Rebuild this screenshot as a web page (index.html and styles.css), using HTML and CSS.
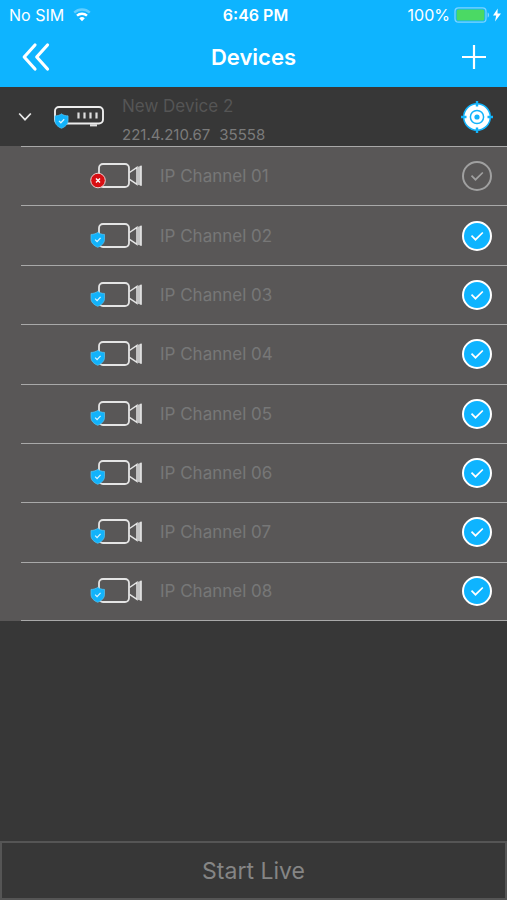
FILE: index.html
```html
<!DOCTYPE html>
<html lang="en">
<head>
<meta charset="utf-8">
<meta name="viewport" content="width=device-width, initial-scale=1">
<title>Devices</title>
<link rel="stylesheet" href="styles.css">
</head>
<body>
<svg class="defs" aria-hidden="true">
  <symbol id="shield" viewBox="0 0 16 17">
    <path d="M8 .8C6.200 2.300 3.700 3 1 3v5c0 4 3 6.700 7 8.300 4-1.600 7-4.300 7-8.300V3C12.300 3 9.800 2.300 8 .8z" fill="#12b3fb" stroke="#5cc6f5" stroke-width=".7"/>
    <path d="M5.300 8.400l2 2 3.600-3.800" fill="none" stroke="#d8f3ff" stroke-width="1.300"/>
  </symbol>
  <symbol id="camera" viewBox="0 0 52 28">
    <rect x="9" y="2" width="30" height="23" rx="4" fill="none" stroke="#e4e4e4" stroke-width="1.800"/>
    <path d="M39.500 10.500L47 5.500v16.800l-7.500-5" fill="none" stroke="#e4e4e4" stroke-width="1.500"/>
    <path d="M47 5.200l4.500-1.600v20.200L47 22.500z" fill="#c4c4c4"/>
    <path d="M51 3.700v20" stroke="#eee" stroke-width="1.300"/>
  </symbol>
  <symbol id="camera-ok" viewBox="0 0 52 28">
    <use href="#camera" width="52" height="28"/>
    <use href="#shield" x="0" y="9.500" width="15.500" height="16.500"/>
  </symbol>
  <symbol id="camera-off" viewBox="0 0 52 28">
    <use href="#camera" width="52" height="28"/>
    <circle cx="8" cy="18.500" r="7.300" fill="#d80e13" stroke="#ead0d0" stroke-width="1"/>
    <path d="M6 16.500l4 4m0-4l-4 4" stroke="#fff" stroke-width="1.400"/>
  </symbol>
  <symbol id="tick" viewBox="0 0 30 30">
    <path d="M9.500 14.700l4 4 7.300-7.200" fill="none" stroke="currentColor" stroke-width="1.700"/>
  </symbol>
</svg>

<div class="app">
  <header class="top">
    <div class="status">
      <div class="carrier">
        <span>No SIM</span>
        <svg width="18" height="14" viewBox="0 0 18 14" fill="none" stroke="#fff" stroke-width="2.400">
          <path d="M1.200 4.600a11.500 11.500 0 0 1 15.600 0" opacity=".35"/>
          <path d="M4 7.700a7.300 7.300 0 0 1 10 0"/>
          <path d="M9 13.200L6.200 10.300a4 4 0 0 1 5.600 0z" fill="#fff" stroke="none"/>
        </svg>
      </div>
      <span class="clock">6:46 PM</span>
      <div class="power">
        <span>100%</span>
        <svg width="48" height="16" viewBox="0 0 48 16">
          <rect x="1" y=".8" width="31" height="14.400" rx="3.500" fill="none" stroke="#7fd5ff" stroke-width="1.200"/>
          <rect x="2.600" y="2.400" width="27.800" height="11.200" rx="1.500" fill="#4bd964"/>
          <path d="M33.600 5.500c2 .6 2 4.400 0 5z" fill="#7fd5ff"/>
          <path d="M43.700 1.500L39 8.600h3.200l-1.200 5.900 6-8h-3.500z" fill="#fff"/>
        </svg>
      </div>
    </div>
    <nav class="nav">
      <button class="icon-button" type="button" aria-label="Back">
        <svg width="30" height="30" viewBox="0 0 30 30" fill="none" stroke="#fff" stroke-width="3.200" stroke-linecap="round" stroke-linejoin="round">
          <path d="M14 3L3.200 15 14 27M26.500 3L15.700 15l10.800 12"/>
        </svg>
      </button>
      <h1 class="title">Devices</h1>
      <button class="icon-button add" type="button" aria-label="Add device">
        <svg width="24" height="24" viewBox="0 0 24 24" stroke="#fff" stroke-width="2.200">
          <path d="M12 0v24M0 12h24"/>
        </svg>
      </button>
    </nav>
  </header>

  <main class="content">
    <section class="device">
      <button class="icon-button" type="button" aria-label="Collapse device">
        <svg width="14" height="10" viewBox="0 0 14 10" fill="none" stroke="#e8e8e8" stroke-width="1.700">
          <path d="M1.200 1.500L7 7.700l5.800-6.200"/>
        </svg>
      </button>
      <svg class="recorder" width="52" height="24" viewBox="0 0 52 24">
        <rect x="2" y="2" width="48" height="16.500" rx="4" fill="none" stroke="#ededed" stroke-width="1.900"/>
        <path d="M25.500 7.500v6M31.500 7.500v6M37.500 7.500v6M43.500 7.500v6" stroke="#ddd" stroke-width="2.200"/>
        <path d="M37 20.300h7" stroke="#ddd" stroke-width="2.200"/>
        <use href="#shield" x="1" y="8" width="15" height="16"/>
      </svg>
      <div class="info">
        <h2 class="name">New Device 2</h2>
        <p class="address"><span>221.4.210.67</span><span>35558</span></p>
      </div>
      <button class="icon-button" type="button" aria-label="Device settings">
        <svg width="32" height="32" viewBox="0 0 32 32" fill="none" stroke="#12b3fb">
          <circle cx="16" cy="16" r="13.300" fill="#fff" stroke-width="1.500"/>
          <circle cx="16" cy="16" r="6.600" stroke-width="1.500"/>
          <circle cx="16" cy="16" r="2.600" fill="#12b3fb" stroke="none"/>
          <path d="M16 0v5.500M16 26.500V32M0 16h5.500M26.500 16H32" stroke-width="2.400"/>
        </svg>
      </button>
    </section>

    <ul class="channels">
      <li class="channel"><label class="row"><svg class="camera"><use href="#camera-off"/></svg><span class="label">IP Channel 01</span><span class="check"><input type="checkbox"><svg><use href="#tick"/></svg></span></label></li>
      <li class="channel"><label class="row"><svg class="camera"><use href="#camera-ok"/></svg><span class="label">IP Channel 02</span><span class="check"><input type="checkbox" checked><svg><use href="#tick"/></svg></span></label></li>
      <li class="channel"><label class="row"><svg class="camera"><use href="#camera-ok"/></svg><span class="label">IP Channel 03</span><span class="check"><input type="checkbox" checked><svg><use href="#tick"/></svg></span></label></li>
      <li class="channel"><label class="row"><svg class="camera"><use href="#camera-ok"/></svg><span class="label">IP Channel 04</span><span class="check"><input type="checkbox" checked><svg><use href="#tick"/></svg></span></label></li>
      <li class="channel"><label class="row"><svg class="camera"><use href="#camera-ok"/></svg><span class="label">IP Channel 05</span><span class="check"><input type="checkbox" checked><svg><use href="#tick"/></svg></span></label></li>
      <li class="channel"><label class="row"><svg class="camera"><use href="#camera-ok"/></svg><span class="label">IP Channel 06</span><span class="check"><input type="checkbox" checked><svg><use href="#tick"/></svg></span></label></li>
      <li class="channel"><label class="row"><svg class="camera"><use href="#camera-ok"/></svg><span class="label">IP Channel 07</span><span class="check"><input type="checkbox" checked><svg><use href="#tick"/></svg></span></label></li>
      <li class="channel"><label class="row"><svg class="camera"><use href="#camera-ok"/></svg><span class="label">IP Channel 08</span><span class="check"><input type="checkbox" checked><svg><use href="#tick"/></svg></span></label></li>
    </ul>
  </main>

  <button class="start" type="button">Start Live</button>
</div>
</body>
</html>
```
FILE: styles.css
```css
:root {
  --blue: #0eb4ff;
  --dark: #373737;
  --panel: #595757;
  --line: #a9a9a9;
}

* {
  box-sizing: border-box;
  margin: 0;
  padding: 0;
}

body {
  background: var(--dark);
  font-family: Inter, "Liberation Sans", sans-serif;
}

svg {
  display: block;
  flex: none;
}

.defs {
  position: absolute;
  width: 0;
  height: 0;
}

.app {
  display: flex;
  flex-direction: column;
  min-height: 100vh;
}

.top {
  background: var(--blue);
  color: #fff;
}

.status {
  display: grid;
  grid-template-columns: 1fr auto 1fr;
  align-items: center;
  height: 30px;
  padding: 0 5px 0 9px;
  font-size: 16px;
}

.carrier,
.power {
  display: flex;
  align-items: center;
  gap: 9px;
}

.power {
  justify-content: flex-end;
  gap: 4px;
}

.clock {
  font-weight: 600;
}

.nav {
  display: grid;
  grid-template-columns: 1fr auto 1fr;
  align-items: center;
  height: 57px;
  padding: 0 21px 4px;
}

.title {
  font-size: 22px;
  font-weight: 600;
}

.icon-button {
  justify-self: start;
  border: 0;
  background: none;
  cursor: pointer;
}

.add {
  justify-self: end;
}

.content {
  flex: 1;
}

.device {
  display: flex;
  align-items: center;
  height: 59px;
  padding: 0 14px 0 18px;
}

.recorder {
  margin-left: 21px;
}

.info {
  flex: 1;
  align-self: flex-end;
  margin-left: 17px;
}

.name {
  color: #555;
  font-size: 17px;
  font-weight: 400;
  line-height: 36px;
}

.address {
  display: flex;
  gap: 9px;
  color: #7b7b7b;
  font-size: 15px;
  line-height: 22px;
}

.channels {
  display: grid;
  grid-auto-rows: 1fr;
  min-height: 475px;
  background: var(--panel);
  list-style: none;
}

.channel {
  display: flex;
  padding-left: 21px;
}

.row {
  display: flex;
  flex: 1;
  align-items: center;
  padding: 0 15px 0 69px;
  border-top: 1px solid var(--line);
  cursor: pointer;
}

.channel:last-child .row {
  border-bottom: 1px solid var(--line);
}

.camera {
  width: 52px;
  height: 28px;
}

.label {
  flex: 1;
  margin-left: 18px;
  color: #777;
  font-size: 17px;
}

.check {
  display: grid;
  color: #a0a0a0;
}

.check input,
.check svg {
  grid-area: 1 / 1;
  width: 30px;
  height: 30px;
}

.check input {
  appearance: none;
  border: 2px solid #a0a0a0;
  border-radius: 50%;
}

.check svg {
  pointer-events: none;
}

.check input:checked {
  border-color: #fff;
  background: var(--blue);
}

.check input:checked + svg {
  color: #fff;
}

.start {
  height: 59px;
  border: 2px solid #555;
  background: var(--dark);
  color: #858585;
  font-family: inherit;
  font-size: 23px;
  cursor: pointer;
}
```
